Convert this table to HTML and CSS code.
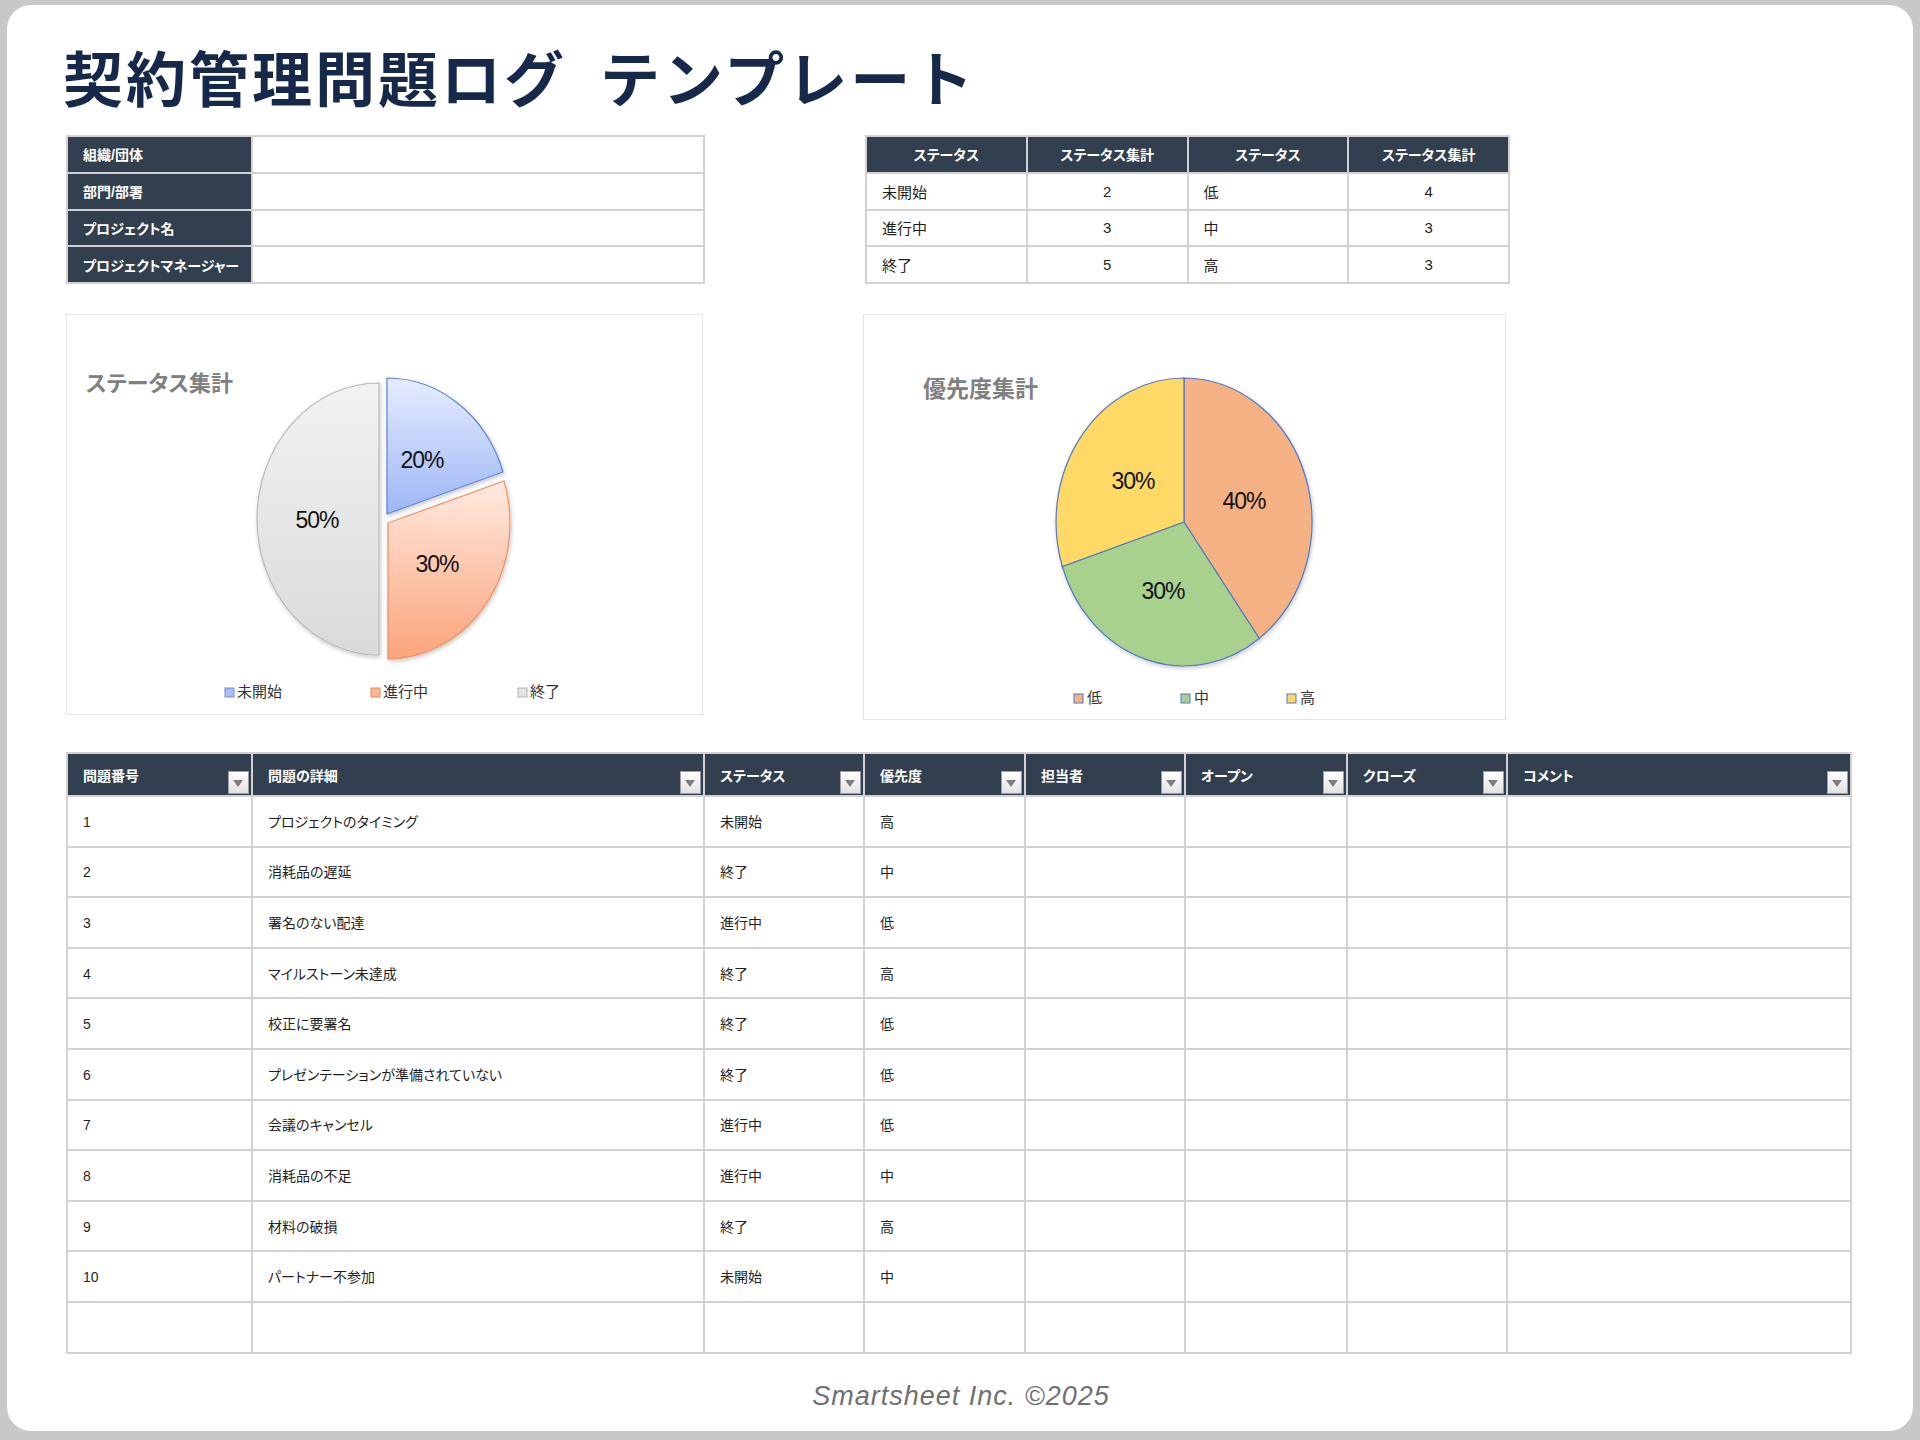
FILE: index.html
```html
<!DOCTYPE html>
<html lang="ja">
<head>
<meta charset="utf-8">
<title>契約管理問題ログ テンプレート</title>
<link rel="stylesheet" href="styles.css">
</head>
<body>
<div class="sheet">
  <h1 class="title">契約管理問題ログ&#8194;テンプレート</h1>

  <div class="top-row">
    <table class="info">
      <colgroup><col class="c-label"><col class="c-value"></colgroup>
      <tr><th>組織/団体</th><td></td></tr>
      <tr><th>部門/部署</th><td></td></tr>
      <tr><th>プロジェクト名</th><td></td></tr>
      <tr><th>プロジェクトマネージャー</th><td></td></tr>
    </table>

    <table class="summary">
      <colgroup><col class="c-s"><col class="c-s"><col class="c-s"><col class="c-s"></colgroup>
      <tr><th>ステータス</th><th>ステータス集計</th><th>ステータス</th><th>ステータス集計</th></tr>
      <tr><td>未開始</td><td class="num">2</td><td>低</td><td class="num">4</td></tr>
      <tr><td>進行中</td><td class="num">3</td><td>中</td><td class="num">3</td></tr>
      <tr><td>終了</td><td class="num">5</td><td>高</td><td class="num">3</td></tr>
    </table>
  </div>

  <div class="chart-row">
    <div class="chart chart-status">
      <svg width="635" height="399" viewBox="0 0 635 399">
        <defs>
          <linearGradient id="gBlue" x1="0" y1="0" x2="0" y2="1">
            <stop offset="0" stop-color="#e6ecfd"/><stop offset="1" stop-color="#9cb6f6"/>
          </linearGradient>
          <linearGradient id="gOrange" x1="0" y1="0" x2="0" y2="1">
            <stop offset="0" stop-color="#ffeae0"/><stop offset="1" stop-color="#fba47b"/>
          </linearGradient>
          <linearGradient id="gGray" x1="0" y1="0" x2="0" y2="1">
            <stop offset="0" stop-color="#f2f2f2"/><stop offset="1" stop-color="#dadada"/>
          </linearGradient>
          <filter id="sh1" x="-20%" y="-20%" width="140%" height="140%">
            <feDropShadow dx="1" dy="2" stdDeviation="2" flood-color="#000" flood-opacity="0.22"/>
          </filter>
        </defs>
        <text class="chart-title" x="19" y="76">ステータス集計</text>
        <g filter="url(#sh1)">
          <path d="M312 204 L312 68 A122 136 0 0 0 312 340 Z" fill="url(#gGray)" stroke="#b9b9b9" stroke-width="1.2"/>
          <path d="M320 199 L320 63 A122 136 0 0 1 436 157 Z" fill="url(#gBlue)" stroke="#5b84d6" stroke-width="1.2"/>
          <path d="M321 208 L437 166 A122 136 0 0 1 321 344 Z" fill="url(#gOrange)" stroke="#ef9060" stroke-width="1.2"/>
        </g>
        <text class="pct" x="355" y="153">20%</text>
        <text class="pct" x="370" y="257">30%</text>
        <text class="pct" x="250" y="213">50%</text>
        <rect x="158" y="373" width="9" height="9" fill="#a9c0f6" stroke="#6d8fdc" stroke-width="1"/>
        <text class="legend" x="170" y="382">未開始</text>
        <rect x="304" y="373" width="9" height="9" fill="#fbb793" stroke="#ec8a5a" stroke-width="1"/>
        <text class="legend" x="316" y="382">進行中</text>
        <rect x="451" y="373" width="9" height="9" fill="#e4e4e4" stroke="#b3b3b3" stroke-width="1"/>
        <text class="legend" x="463" y="382">終了</text>
      </svg>
    </div>

    <div class="chart chart-priority">
      <svg width="641" height="404" viewBox="0 0 641 404">
        <defs>
          <filter id="sh2" x="-20%" y="-20%" width="140%" height="140%">
            <feDropShadow dx="1" dy="2" stdDeviation="2" flood-color="#000" flood-opacity="0.2"/>
          </filter>
        </defs>
        <text class="chart-title" x="59" y="82">優先度集計</text>
        <g filter="url(#sh2)" stroke="#5078c6" stroke-width="1.2">
          <path d="M320 207 L320 63 A128 144 0 0 1 395.2 323.5 Z" fill="#f4b183"/>
          <path d="M320 207 L395.2 323.5 A128 144 0 0 1 198.3 251.5 Z" fill="#a9d18e"/>
          <path d="M320 207 L198.3 251.5 A128 144 0 0 1 320 63 Z" fill="#ffd966"/>
        </g>
        <text class="pct" x="380" y="194">40%</text>
        <text class="pct" x="269" y="174">30%</text>
        <text class="pct" x="299" y="284">30%</text>
        <rect x="210" y="379" width="9" height="9" fill="#f4b183" stroke="#5078c6" stroke-width="1"/>
        <text class="legend" x="223" y="388">低</text>
        <rect x="317" y="379" width="9" height="9" fill="#a9d18e" stroke="#5078c6" stroke-width="1"/>
        <text class="legend" x="330" y="388">中</text>
        <rect x="423" y="379" width="9" height="9" fill="#ffd966" stroke="#5078c6" stroke-width="1"/>
        <text class="legend" x="436" y="388">高</text>
      </svg>
    </div>
  </div>

  <table class="issues">
    <colgroup>
      <col class="w185"><col class="w452"><col class="w160"><col class="w161">
      <col class="w160"><col class="w162"><col class="w160"><col class="w344">
    </colgroup>
    <thead>
      <tr class="head">
        <th>問題番号<span class="filter"></span></th>
        <th>問題の詳細<span class="filter"></span></th>
        <th>ステータス<span class="filter"></span></th>
        <th>優先度<span class="filter"></span></th>
        <th>担当者<span class="filter"></span></th>
        <th>オープン<span class="filter"></span></th>
        <th>クローズ<span class="filter"></span></th>
        <th>コメント<span class="filter"></span></th>
      </tr>
    </thead>
    <tbody>
      <tr><td>1</td><td>プロジェクトのタイミング</td><td>未開始</td><td>高</td><td></td><td></td><td></td><td></td></tr>
      <tr><td>2</td><td>消耗品の遅延</td><td>終了</td><td>中</td><td></td><td></td><td></td><td></td></tr>
      <tr><td>3</td><td>署名のない配達</td><td>進行中</td><td>低</td><td></td><td></td><td></td><td></td></tr>
      <tr><td>4</td><td>マイルストーン未達成</td><td>終了</td><td>高</td><td></td><td></td><td></td><td></td></tr>
      <tr><td>5</td><td>校正に要署名</td><td>終了</td><td>低</td><td></td><td></td><td></td><td></td></tr>
      <tr><td>6</td><td>プレゼンテーションが準備されていない</td><td>終了</td><td>低</td><td></td><td></td><td></td><td></td></tr>
      <tr><td>7</td><td>会議のキャンセル</td><td>進行中</td><td>低</td><td></td><td></td><td></td><td></td></tr>
      <tr><td>8</td><td>消耗品の不足</td><td>進行中</td><td>中</td><td></td><td></td><td></td><td></td></tr>
      <tr><td>9</td><td>材料の破損</td><td>終了</td><td>高</td><td></td><td></td><td></td><td></td></tr>
      <tr><td>10</td><td>パートナー不参加</td><td>未開始</td><td>中</td><td></td><td></td><td></td><td></td></tr>
      <tr><td></td><td></td><td></td><td></td><td></td><td></td><td></td><td></td></tr>
    </tbody>
  </table>

  <div class="footer">Smartsheet Inc. ©2025</div>
</div>
</body>
</html>
```

FILE: styles.css
```css
html, body {
  margin: 0;
  padding: 0;
}
body {
  background: #c8c8c8;
  width: 1920px;
  height: 1440px;
  overflow: hidden;
  font-family: "Liberation Sans", "Noto Sans CJK JP", sans-serif;
  font-feature-settings: "palt";
}
.sheet {
  margin: 5px 7px 0 7px;
  height: 1426px;
  background: #ffffff;
  border-radius: 24px;
  padding-left: 59px;
  box-sizing: border-box;
  overflow: hidden;
}
.title {
  margin: 0 0 0 -3px;
  padding-top: 35px;
  font-family: "Noto Sans CJK JP", sans-serif;
  font-feature-settings: normal;
  font-size: 60px;
  line-height: 72px;
  font-weight: 700;
  letter-spacing: 3px;
  color: #17294a;
  white-space: nowrap;
}

/* top tables */
.top-row {
  margin-top: 23px;
  display: flex;
  gap: 160px;
  align-items: flex-start;
}
table {
  border-collapse: collapse;
  table-layout: fixed;
}
.info { width: 637px; }
.info .c-label { width: 185px; }
.info .c-value { width: 452px; }
.info tr { height: 36.75px; }
.info th, .info td {
  border: 2px solid #d2d2d2;
  padding: 0;
}
.info th {
  background: #323f4f;
  color: #ffffff;
  font-size: 14px;
  font-weight: 700;
  text-align: left;
  padding-left: 15px;
  white-space: nowrap;
}
.summary { width: 643px; }
.summary .c-s { width: 160.75px; }
.summary tr { height: 36.75px; }
.summary th, .summary td {
  border: 2px solid #d2d2d2;
  padding: 0;
}
.summary th {
  background: #323f4f;
  color: #ffffff;
  font-size: 14px;
  font-weight: 700;
  text-align: center;
}
.summary td {
  font-size: 15px;
  color: #1f1f1f;
  padding-left: 15px;
}
.summary td.num {
  text-align: center;
  padding-left: 0;
}

/* charts */
.chart-row {
  margin-top: 30px;
  display: flex;
  gap: 160px;
  align-items: flex-start;
}
.chart {
  border: 1px solid #e4e4e4;
  background: #ffffff;
}
.chart svg { display: block; }
.chart-status { width: 635px; height: 399px; }
.chart-priority { width: 641px; height: 404px; }
.chart-title {
  font-family: "Noto Sans CJK JP", sans-serif;
  font-weight: 700;
  font-size: 22px;
  fill: #808080;
}
.chart-priority .chart-title { font-size: 23px; }
.pct {
  font-family: "Liberation Sans", sans-serif;
  font-size: 23px;
  letter-spacing: -1px;
  text-anchor: middle;
  fill: #111111;
}
.legend {
  font-family: "Noto Sans CJK JP", sans-serif;
  font-size: 15px;
  fill: #333333;
}

/* issues table */
.issues {
  margin-top: 32px;
  width: 1784px;
}
.w185 { width: 185px; }
.w452 { width: 452px; }
.w160 { width: 160px; }
.w161 { width: 161px; }
.w162 { width: 162px; }
.w344 { width: 344px; }
.issues tr.head { height: 43px; }
.issues tbody tr { height: 50.6px; }
.issues th {
  position: relative;
  padding: 0 0 0 15px;
  background: #323f4f;
  color: #ffffff;
  font-size: 14px;
  font-weight: 700;
  text-align: left;
  border: 2px solid #d2d2d2;
  white-space: nowrap;
}
.issues td {
  padding: 1px 0 0 15px;
  border: 2px solid #d2d2d2;
  font-size: 14px;
  line-height: 18px;
  color: #1f1f1f;
  white-space: nowrap;
}
.filter {
  position: absolute;
  right: 2px;
  bottom: 1px;
  width: 21px;
  height: 23px;
  box-sizing: border-box;
  border: 1px solid #9c9c9c;
  background: linear-gradient(#ffffff, #e2e2e2);
}
.filter::after {
  content: "";
  position: absolute;
  left: 4px;
  top: 8px;
  border-left: 5.5px solid transparent;
  border-right: 5.5px solid transparent;
  border-top: 7px solid #7c7c7c;
}

.footer {
  width: 1790px;
  margin-top: 22px;
  text-align: center;
  font-family: "Liberation Sans", sans-serif;
  font-style: italic;
  font-size: 27px;
  line-height: 40px;
  letter-spacing: 1px;
  color: #707070;
}
```
